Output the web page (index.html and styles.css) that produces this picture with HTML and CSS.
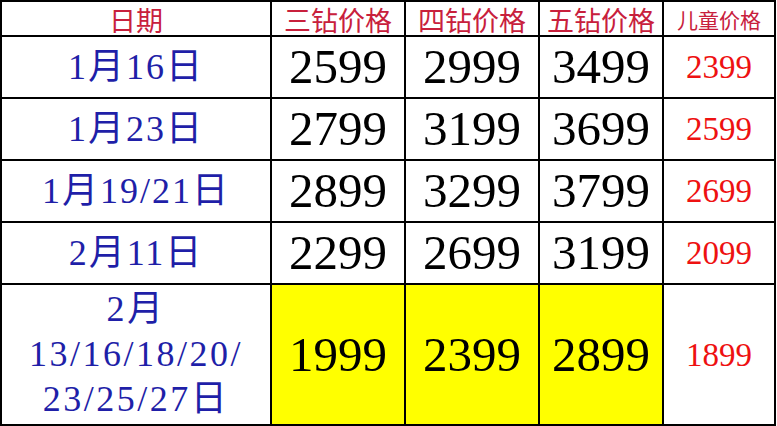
FILE: index.html
```html
<!DOCTYPE html>
<html lang="zh-CN">
<head>
<meta charset="utf-8">
<title>价格表</title>
<link rel="stylesheet" href="styles.css">
</head>
<body>
<table class="price-table">
  <colgroup>
    <col class="c-date">
    <col class="c-price">
    <col class="c-price">
    <col class="c-five">
    <col class="c-kid">
  </colgroup>
  <thead>
    <tr class="row-head">
      <th>日期</th>
      <th>三钻价格</th>
      <th>四钻价格</th>
      <th>五钻价格</th>
      <th class="kid-head">儿童价格</th>
    </tr>
  </thead>
  <tbody>
    <tr class="row">
      <td class="date">1月16日</td>
      <td class="num">2599</td>
      <td class="num">2999</td>
      <td class="num">3499</td>
      <td class="kid">2399</td>
    </tr>
    <tr class="row">
      <td class="date">1月23日</td>
      <td class="num">2799</td>
      <td class="num">3199</td>
      <td class="num">3699</td>
      <td class="kid">2599</td>
    </tr>
    <tr class="row">
      <td class="date">1月19/21日</td>
      <td class="num">2899</td>
      <td class="num">3299</td>
      <td class="num">3799</td>
      <td class="kid">2699</td>
    </tr>
    <tr class="row">
      <td class="date">2月11日</td>
      <td class="num">2299</td>
      <td class="num">2699</td>
      <td class="num">3199</td>
      <td class="kid">2099</td>
    </tr>
    <tr class="row-tall">
      <td class="date multi">2月<br>13/16/18/20/<br>23/25/27日</td>
      <td class="num hl">1999</td>
      <td class="num hl">2399</td>
      <td class="num hl">2899</td>
      <td class="kid">1899</td>
    </tr>
  </tbody>
</table>
</body>
</html>
```

FILE: styles.css
```css
html, body {
  margin: 0;
  padding: 0;
  background: #ffffff;
}

.price-table {
  table-layout: fixed;
  width: 776px;
  border-collapse: separate;
  border-spacing: 2px;
  background: #000000;
  font-family: "Liberation Serif", "Noto Sans CJK SC", serif;
}

.c-date { width: 268px; }
.c-price { width: 132px; }
.c-five { width: 122px; }
.c-kid { width: 110px; }

.price-table th,
.price-table td {
  background: #ffffff;
  padding: 0;
  text-align: center;
  vertical-align: middle;
  white-space: nowrap;
}

.row-head { height: 33px; }
.row { height: 60px; }
.row-tall { height: 139px; }

.row-head th {
  font-family: "Noto Sans CJK SC", sans-serif;
  font-weight: normal;
  font-size: 27px;
  line-height: 31px;
  padding-top: 2px;
  height: 31px;
  color: #c8203c;
}

.row-head .kid-head {
  font-size: 21px;
}

.date {
  color: #1f1fa8;
  font-size: 36px;
  letter-spacing: 2px;
  line-height: 44px;
}

.date.multi {
  line-height: 45px;
  letter-spacing: 2.5px;
}

.num {
  color: #000000;
  font-size: 49px;
  line-height: 56px;
}

.num.hl {
  background: #ffff00;
}

.kid {
  color: #ee1111;
  font-size: 33px;
  line-height: 40px;
}
```
